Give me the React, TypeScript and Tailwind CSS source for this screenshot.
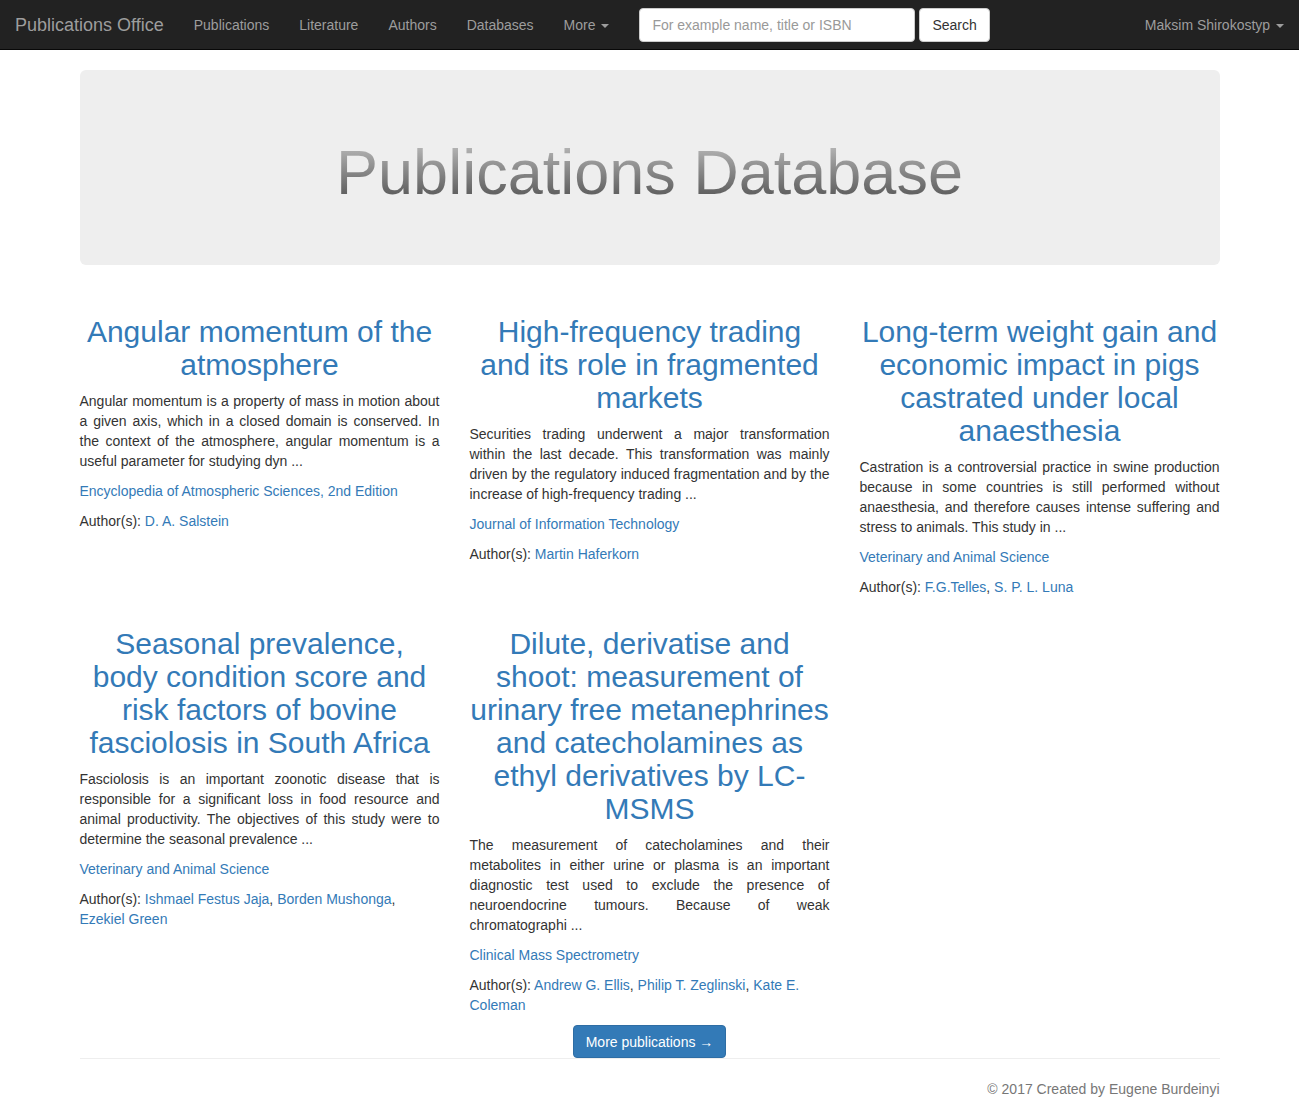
import React from "react";

type Pub = {
  title: string;
  text: string;
  journal: string;
  authors: string[];
};

const pubs: Pub[] = [
  {
    title: "Angular momentum of the atmosphere",
    text: "Angular momentum is a property of mass in motion about a given axis, which in a closed domain is conserved. In the context of the atmosphere, angular momentum is a useful parameter for studying dyn ...",
    journal: "Encyclopedia of Atmospheric Sciences, 2nd Edition",
    authors: ["D. A. Salstein"],
  },
  {
    title: "High-frequency trading and its role in fragmented markets",
    text: "Securities trading underwent a major transformation within the last decade. This transformation was mainly driven by the regulatory induced fragmentation and by the increase of high-frequency trading ...",
    journal: "Journal of Information Technology",
    authors: ["Martin Haferkorn"],
  },
  {
    title: "Long-term weight gain and economic impact in pigs castrated under local anaesthesia",
    text: "Castration is a controversial practice in swine production because in some countries is still performed without anaesthesia, and therefore causes intense suffering and stress to animals. This study in ...",
    journal: "Veterinary and Animal Science",
    authors: ["F.G.Telles", "S. P. L. Luna"],
  },
  {
    title: "Seasonal prevalence, body condition score and risk factors of bovine fasciolosis in South Africa",
    text: "Fasciolosis is an important zoonotic disease that is responsible for a significant loss in food resource and animal productivity. The objectives of this study were to determine the seasonal prevalence ...",
    journal: "Veterinary and Animal Science",
    authors: ["Ishmael Festus Jaja", "Borden Mushonga", "Ezekiel Green"],
  },
  {
    title: "Dilute, derivatise and shoot: measurement of urinary free metanephrines and catecholamines as ethyl derivatives by LC-MSMS",
    text: "The measurement of catecholamines and their metabolites in either urine or plasma is an important diagnostic test used to exclude the presence of neuroendocrine tumours. Because of weak chromatographi ...",
    journal: "Clinical Mass Spectrometry",
    authors: ["Andrew G. Ellis", "Philip T. Zeglinski", "Kate E. Coleman"],
  },
];

const Caret = () => (
  <span className="inline-block w-0 h-0 ml-[2px] align-middle border-t-[4px] border-t-current border-x-[4px] border-x-transparent" />
);

const PubCard = ({ pub }: { pub: Pub }) => (
  <div>
    <h2 className="mt-5 mb-[10px] text-[30px] leading-[33px] text-center text-[#337ab7]">
      <a href="#">{pub.title}</a>
    </h2>
    <p className="mb-[10px] text-justify">{pub.text}</p>
    <p className="mb-[10px]">
      <a href="#" className="text-[#337ab7]">{pub.journal}</a>
    </p>
    <p className="mb-[10px]">
      Author(s):{" "}
      {pub.authors.map((a, i) => (
        <span key={a}>
          <a href="#" className="text-[#337ab7]">{a}</a>
          {i < pub.authors.length - 1 ? ", " : ""}
        </span>
      ))}
    </p>
  </div>
);

export default function App() {
  return (
    <div className="min-h-[1119px] bg-white text-[14px] leading-[20px] text-[#333] font-['Liberation_Sans',Arial,sans-serif]">
      {/* navbar */}
      <nav className="h-[50px] bg-[#222] border-b border-[#080808] flex items-start pr-[15px]">
        <a href="#" className="px-[15px] py-[15px] text-[18px] leading-[20px] text-[#9d9d9d]">
          Publications Office
        </a>
        <ul className="flex">
          {["Publications", "Literature", "Authors", "Databases"].map((l) => (
            <li key={l}>
              <a href="#" className="block px-[15px] py-[15px] text-[#9d9d9d]">{l}</a>
            </li>
          ))}
          <li>
            <a href="#" className="block px-[15px] py-[15px] text-[#9d9d9d]">
              More <Caret />
            </a>
          </li>
        </ul>
        <form className="flex gap-[4px] ml-[15px] mt-[8px]">
          <input
            className="w-[276px] h-[34px] px-[12px] py-[6px] bg-white border border-[#ccc] rounded-[4px] text-[#555] placeholder:text-[#999] outline-none"
            placeholder="For example name, title or ISBN"
          />
          <button
            type="button"
            className="h-[34px] px-[12px] bg-white border border-[#ccc] rounded-[4px] text-[#333]"
          >
            Search
          </button>
        </form>
        <a href="#" className="ml-auto block py-[15px] text-[#9d9d9d]">
          Maksim Shirokostyp <Caret />
        </a>
      </nav>

      <div className="w-[1170px] mx-auto px-[15px]">
        {/* jumbotron */}
        <div className="mt-5 mb-[30px] bg-[#eee] rounded-[6px] py-[48px] px-[60px] text-center">
          <h1 className="mt-5 mb-[10px] text-[63px] leading-[69px] inline-block bg-linear-to-b from-[#c4c4c4] to-[#4c4c4c] bg-clip-text text-transparent">
            Publications Database
          </h1>
        </div>

        <div className="grid grid-cols-3 gap-x-[30px]">
          {pubs.map((p) => (
            <PubCard key={p.title} pub={p} />
          ))}
        </div>

        <div className="flex justify-center">
          <a
            href="#"
            className="h-[33px] px-[12px] py-[6px] bg-[#337ab7] border border-[#2e6da4] rounded-[4px] text-white"
          >
            More publications →
          </a>
        </div>

        <footer>
          <hr className="mt-0 mb-5 border-t border-[#eee]" />
          <p className="text-right text-[#777]">© 2017 Created by Eugene Burdeinyi</p>
        </footer>
      </div>
    </div>
  );
}
